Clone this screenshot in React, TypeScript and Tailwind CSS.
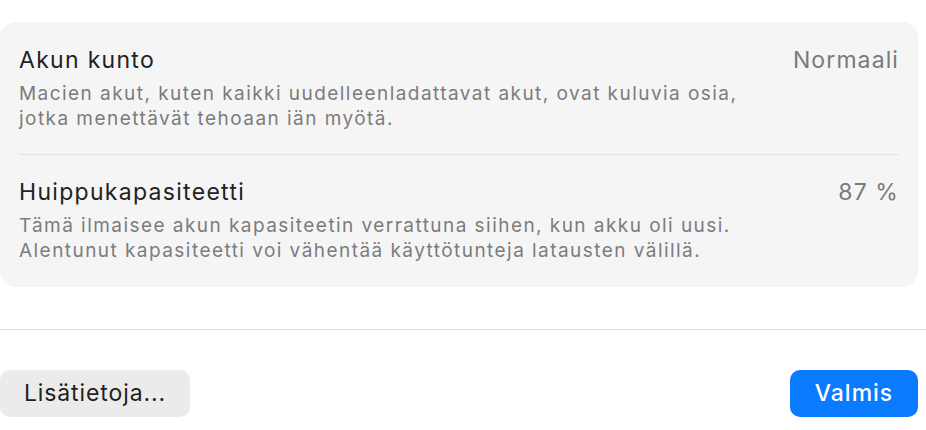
export default function App() {
  const rows = [
    {
      title: "Akun kunto",
      value: "Normaali",
      lines: [
        "Macien akut, kuten kaikki uudelleenladattavat akut, ovat kuluvia osia,",
        "jotka menettävät tehoaan iän myötä.",
      ],
    },
    {
      title: "Huippukapasiteetti",
      value: "87 %",
      lines: [
        "Tämä ilmaisee akun kapasiteetin verrattuna siihen, kun akku oli uusi.",
        "Alentunut kapasiteetti voi vähentää käyttötunteja latausten välillä.",
      ],
    },
  ]

  return (
    <div className="w-[926px] h-[430px] bg-white overflow-hidden font-[Inter,sans-serif] antialiased">
      <div className="mt-[22px] w-[918px] rounded-[16px] bg-[#f5f5f5] px-[19px]">
        {rows.map((row, i) => (
          <div
            key={row.title}
            className={i === 0 ? "pt-[24px] pb-[23px] border-b border-[#e4e4e4]" : "pt-[23px] pb-[24px]"}
          >
            <div className="flex items-start justify-between">
              <div className="text-[23px] leading-[28px] tracking-[1.3px] text-[#222222]">{row.title}</div>
              <div className="text-[23px] leading-[28px] tracking-[1.1px] text-[#7a7a7a]">{row.value}</div>
            </div>
            <div className="mt-[7px] text-[19px] leading-[25px] tracking-[1.45px] text-[#7c7c7c]">
              {row.lines.map((l) => (
                <div key={l}>{l}</div>
              ))}
            </div>
          </div>
        ))}
      </div>

      {/* footer */}
      <div className="mt-[42px] h-px bg-[#dedede]" />
      <div className="mt-[40px] flex w-[918px] items-center justify-between">
        <button className="h-[47px] w-[190px] rounded-[10px] bg-[#ebebeb] text-[23px] tracking-[0.9px] text-[#1f1f1f]">
          Lisätietoja...
        </button>
        <button className="h-[47px] w-[128px] rounded-[10px] bg-[#0a7aff] text-[23px] tracking-[1px] font-medium text-white">
          Valmis
        </button>
      </div>
    </div>
  )
}
